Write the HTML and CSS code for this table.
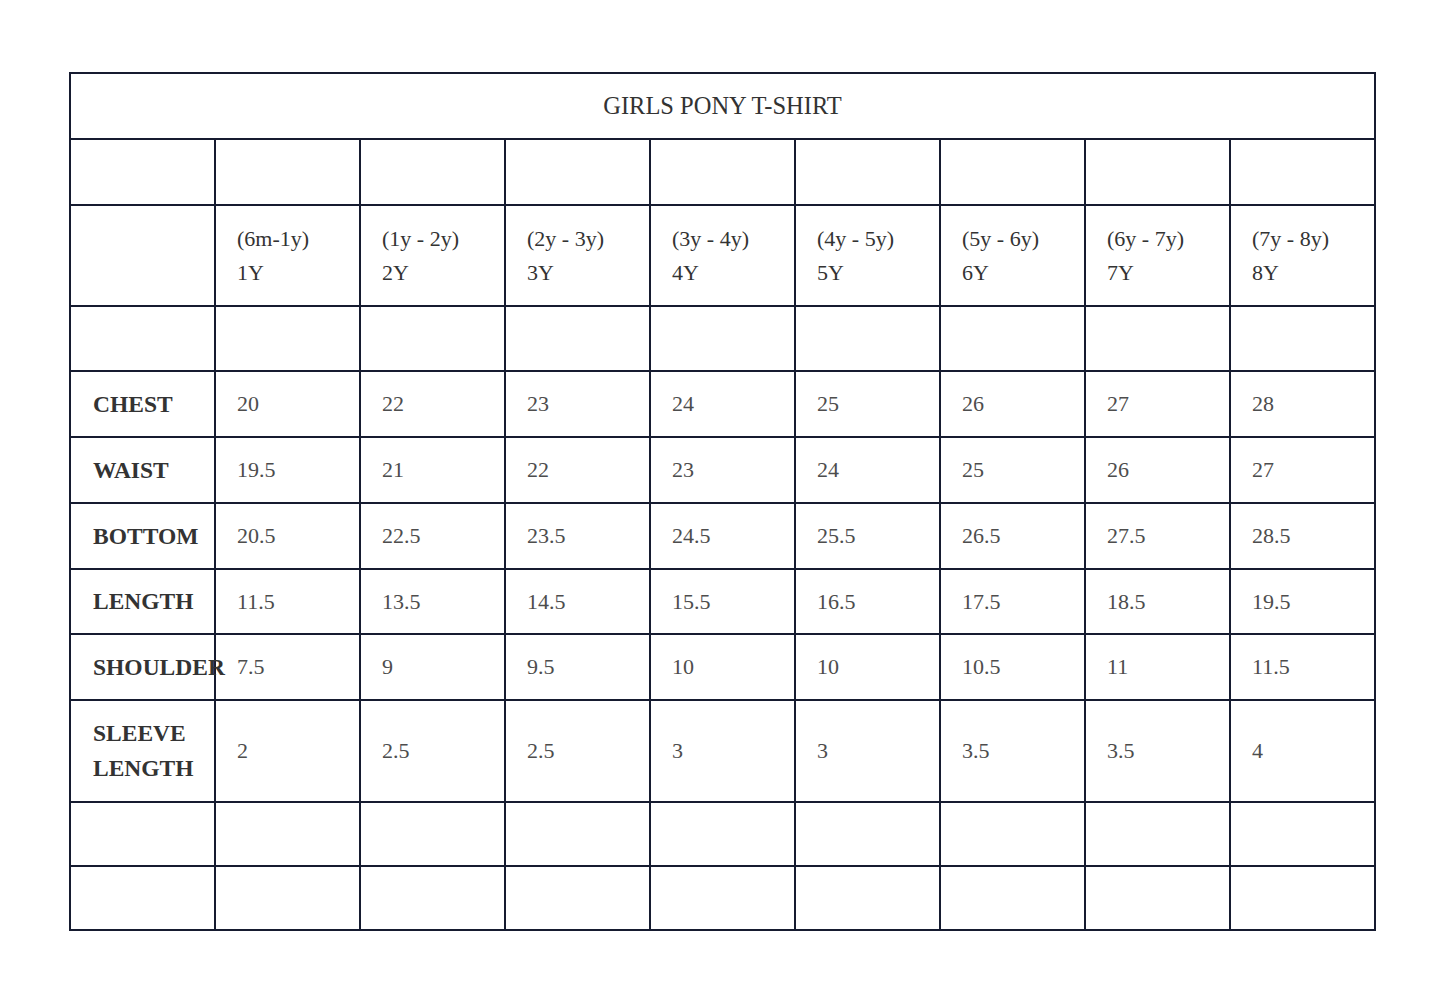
FILE: index.html
```html
<!DOCTYPE html>
<html lang="en">
<head>
<meta charset="utf-8">
<title>Girls Pony T-Shirt Size Chart</title>
<link rel="stylesheet" href="styles.css">
</head>
<body>
<div class="chart">
  <div class="cell title">GIRLS PONY T-SHIRT</div>

  <div class="cell r66"></div><div class="cell r66"></div><div class="cell r66"></div><div class="cell r66"></div><div class="cell r66"></div><div class="cell r66"></div><div class="cell r66"></div><div class="cell r66"></div><div class="cell r66"></div>

  <div class="cell"></div>
  <div class="cell head">(6m-1y)<br>1Y</div>
  <div class="cell head">(1y - 2y)<br>2Y</div>
  <div class="cell head">(2y - 3y)<br>3Y</div>
  <div class="cell head">(3y - 4y)<br>4Y</div>
  <div class="cell head">(4y - 5y)<br>5Y</div>
  <div class="cell head">(5y - 6y)<br>6Y</div>
  <div class="cell head">(6y - 7y)<br>7Y</div>
  <div class="cell head">(7y - 8y)<br>8Y</div>

  <div class="cell"></div><div class="cell"></div><div class="cell"></div><div class="cell"></div><div class="cell"></div><div class="cell"></div><div class="cell"></div><div class="cell"></div><div class="cell"></div>

  <div class="cell label">CHEST</div>
  <div class="cell num">20</div><div class="cell num">22</div><div class="cell num">23</div><div class="cell num">24</div><div class="cell num">25</div><div class="cell num">26</div><div class="cell num">27</div><div class="cell num">28</div>

  <div class="cell label">WAIST</div>
  <div class="cell num">19.5</div><div class="cell num">21</div><div class="cell num">22</div><div class="cell num">23</div><div class="cell num">24</div><div class="cell num">25</div><div class="cell num">26</div><div class="cell num">27</div>

  <div class="cell label">BOTTOM</div>
  <div class="cell num">20.5</div><div class="cell num">22.5</div><div class="cell num">23.5</div><div class="cell num">24.5</div><div class="cell num">25.5</div><div class="cell num">26.5</div><div class="cell num">27.5</div><div class="cell num">28.5</div>

  <div class="cell label">LENGTH</div>
  <div class="cell num">11.5</div><div class="cell num">13.5</div><div class="cell num">14.5</div><div class="cell num">15.5</div><div class="cell num">16.5</div><div class="cell num">17.5</div><div class="cell num">18.5</div><div class="cell num">19.5</div>

  <div class="cell label">SHOULDER</div>
  <div class="cell num">7.5</div><div class="cell num">9</div><div class="cell num">9.5</div><div class="cell num">10</div><div class="cell num">10</div><div class="cell num">10.5</div><div class="cell num">11</div><div class="cell num">11.5</div>

  <div class="cell label">SLEEVE<br>LENGTH</div>
  <div class="cell num">2</div><div class="cell num">2.5</div><div class="cell num">2.5</div><div class="cell num">3</div><div class="cell num">3</div><div class="cell num">3.5</div><div class="cell num">3.5</div><div class="cell num">4</div>

  <div class="cell"></div><div class="cell"></div><div class="cell"></div><div class="cell"></div><div class="cell"></div><div class="cell"></div><div class="cell"></div><div class="cell"></div><div class="cell"></div>

  <div class="cell"></div><div class="cell"></div><div class="cell"></div><div class="cell"></div><div class="cell"></div><div class="cell"></div><div class="cell"></div><div class="cell"></div><div class="cell"></div>
</div>
</body>
</html>
```

FILE: styles.css
```css
html, body {
  margin: 0;
  padding: 0;
  background: #ffffff;
}

body {
  padding: 72px 0 0 69px;
  font-family: "Liberation Serif", "DejaVu Serif", serif;
  color: #333333;
}

.chart {
  display: grid;
  grid-template-columns: repeat(9, 145px);
  grid-template-rows: 66px 66px 101px 65px 66px 66px 66px 65px 66px 102px 64px 64px;
  width: max-content;
  border-top: 2px solid #161b30;
  border-left: 2px solid #161b30;
}

.cell {
  display: flex;
  align-items: center;
  padding-left: 21px;
  border-right: 2px solid #161b30;
  border-bottom: 2px solid #161b30;
  white-space: nowrap;
  min-width: 0;
  overflow: visible;
}

.title {
  grid-column: 1 / -1;
  justify-content: center;
  padding-left: 0;
  font-size: 24.5px;
  color: #333333;
}

.head {
  font-size: 22px;
  line-height: 34px;
  color: #333333;
}

.label {
  font-size: 23.5px;
  font-weight: bold;
  line-height: 35px;
  color: #333333;
  position: relative;
  z-index: 1;
  padding-left: 22px;
}

.num {
  font-size: 22px;
  color: #4d4d4d;
}
```
